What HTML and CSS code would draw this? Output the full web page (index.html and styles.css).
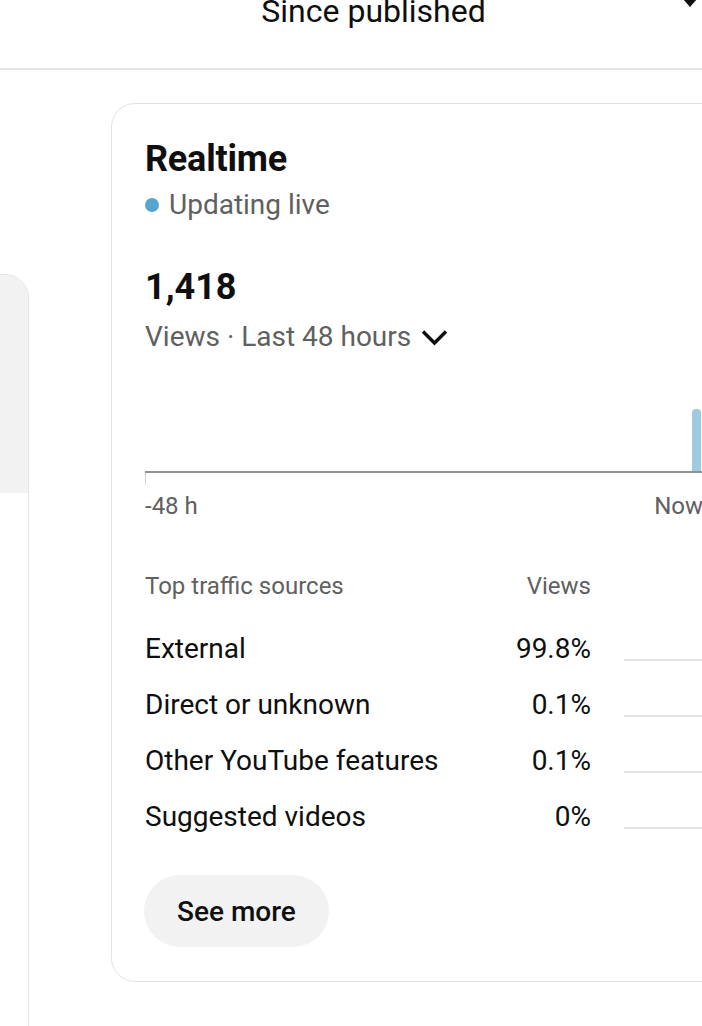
FILE: index.html
```html
<!DOCTYPE html>
<html lang="en">
  <head>
    <meta charset="UTF-8" />
    <meta name="viewport" content="width=device-width, initial-scale=1.0" />
    <title>Video analytics</title>
    <link rel="stylesheet" href="styles.css">
  </head>
  <body>
    <header class="top">
      <div class="range">
        <span class="range-label">Since published</span>
        <svg class="range-arrow" width="14" height="8" viewBox="0 0 14 8">
          <path d="M0 0 L14 0 L7 8 Z" fill="#0f0f0f" />
        </svg>
      </div>
    </header>

    <main class="cards">
      <section class="card side">
        <div class="side-head"></div>
      </section>

      <section class="card realtime">
        <h2 class="title">Realtime</h2>
        <div class="live"><span class="dot"></span>Updating live</div>

        <div class="total">1,418</div>
        <div class="period">
          Views · Last 48 hours
          <svg width="27" height="17" viewBox="0 0 27 17">
            <path d="M2 2.5 L13.5 14 L25 2.5" fill="none" stroke="#0f0f0f" stroke-width="3.4" />
          </svg>
        </div>

        <div class="chart">
          <div class="bar" style="height: 62px"></div>
        </div>
        <div class="tick"></div>
        <div class="axis">
          <span>-48 h</span>
          <span>Now</span>
        </div>

        <div class="sources">
          <div class="row head">
            <span class="name">Top traffic sources</span>
            <span class="pct">Views</span>
            <span class="spacer"></span>
          </div>
          <div class="row">
            <span class="name">External</span>
            <span class="pct">99.8%</span>
            <span class="track"></span>
          </div>
          <div class="row">
            <span class="name">Direct or unknown</span>
            <span class="pct">0.1%</span>
            <span class="track"></span>
          </div>
          <div class="row">
            <span class="name">Other YouTube features</span>
            <span class="pct">0.1%</span>
            <span class="track"></span>
          </div>
          <div class="row">
            <span class="name">Suggested videos</span>
            <span class="pct">0%</span>
            <span class="track"></span>
          </div>
        </div>

        <button class="more">See more</button>
      </section>
    </main>
  </body>
</html>
```

FILE: styles.css
```css
html,
body {
  overflow: hidden;
}
body {
  margin: 0;
  background-color: white;
  color: #0f0f0f;
  font-family: Roboto, "Noto Sans", sans-serif;
}
.top {
  height: 68px;
  border-bottom: 2px solid #e5e5e5;
  padding-left: 64px;
  overflow: hidden;
}
.range {
  display: flex;
  align-items: flex-start;
  margin-top: -9px;
  padding-right: 5px;
}
.range-label {
  flex: 1;
  text-align: center;
  font-size: 32px;
  line-height: 40px;
}
.range-arrow {
  margin-top: 8px;
}
.cards {
  display: flex;
  align-items: flex-start;
  gap: 82px;
  width: 760px;
}
.card {
  box-sizing: border-box;
  flex-shrink: 0;
  border: 1.5px solid #e3e3e3;
  border-radius: 24px;
  background-color: white;
}
.side {
  width: 260px;
  margin-left: -231px;
  margin-top: 204px;
  height: 820px;
  overflow: hidden;
}
.side-head {
  height: 218px;
  background-color: #f2f2f2;
}
.realtime {
  width: 626px;
  margin-top: 33px;
  padding: 33px 33px 34px 33px;
}
.title {
  margin: 0;
  font-size: 36px;
  line-height: 44px;
  font-weight: 700;
  letter-spacing: -0.2px;
}
.live {
  display: flex;
  align-items: center;
  gap: 10px;
  margin-top: 6px;
  font-size: 28px;
  line-height: 36px;
  color: #606060;
}
.dot {
  width: 14px;
  height: 14px;
  border-radius: 50%;
  background-color: #56a5d0;
}
.total {
  margin-top: 42px;
  font-size: 36px;
  line-height: 44px;
  font-weight: 700;
}
.period {
  display: flex;
  align-items: center;
  gap: 10px;
  margin-top: 10px;
  font-size: 28px;
  line-height: 36px;
  color: #606060;
}
.chart {
  display: flex;
  justify-content: flex-end;
  align-items: flex-end;
  height: 100px;
  margin-top: 16px;
  padding-right: 2px;
  border-bottom: 2px solid #919191;
}
.bar {
  width: 9px;
  border-radius: 4px 4px 0 0;
  background-color: #9ecbe1;
}
.tick {
  width: 1px;
  height: 12px;
  background-color: #d6d6d6;
}
.axis {
  display: flex;
  justify-content: space-between;
  margin-top: 5px;
  font-size: 24px;
  line-height: 32px;
  color: #606060;
}
.sources {
  margin-top: 48px;
}
.row {
  display: flex;
  align-items: flex-start;
  font-size: 28px;
  line-height: 56px;
}
.row.head {
  font-size: 24px;
  line-height: 32px;
  color: #606060;
  margin-bottom: 19px;
}
.name {
  flex: 1;
}
.pct {
  text-align: right;
}
.track,
.spacer {
  width: 79px;
  margin-left: 33px;
}
.track {
  height: 2px;
  margin-top: 38px;
  background-color: #e5e5e5;
}
.more {
  display: block;
  margin-top: 30px;
  margin-left: -1px;
  height: 72px;
  padding: 0 33px;
  border: none;
  border-radius: 36px;
  background-color: #f2f2f2;
  color: #0f0f0f;
  font-family: Roboto, "Noto Sans", sans-serif;
  font-size: 28px;
  font-weight: 500;
  cursor: pointer;
}
```
